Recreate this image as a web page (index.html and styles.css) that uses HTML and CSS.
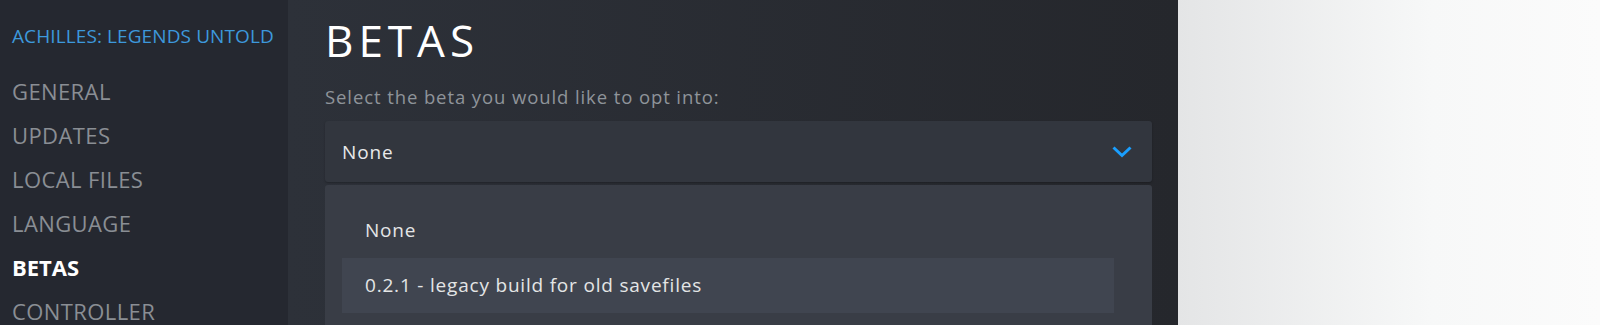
FILE: index.html
```html
<!DOCTYPE html>
<html lang="en">
<head>
    <meta charset="UTF-8">
    <meta name="viewport" content="width=device-width, initial-scale=1.0">
    <title>Properties - Betas</title>
    <link rel="stylesheet" href="styles.css">
</head>
<body>
    <div class="sidebar">
        <div class="game-title">ACHILLES: LEGENDS UNTOLD</div>
        <div class="nav-item">GENERAL</div>
        <div class="nav-item">UPDATES</div>
        <div class="nav-item">LOCAL FILES</div>
        <div class="nav-item">LANGUAGE</div>
        <div class="nav-item active">BETAS</div>
        <div class="nav-item">CONTROLLER</div>
    </div>

    <div class="main">
        <h1>BETAS</h1>
        <p class="hint">Select the beta you would like to opt into:</p>

        <div class="dropdown">
            <span>None</span>
            <svg class="chevron" width="20" height="12" viewBox="0 0 20 12">
                <path d="M1.5 1.5 L10 9.5 L18.5 1.5" fill="none" stroke="#1a9fff" stroke-width="3"/>
            </svg>
        </div>

        <div class="dropdown-list">
            <div class="option">None</div>
            <div class="option selected">0.2.1 - legacy build for old savefiles</div>
        </div>
    </div>

    <div class="outside"></div>
</body>
</html>
```

FILE: styles.css
```css
body {
    margin: 0;
    height: 325px;
    overflow: hidden;
    display: flex;
    font-family: "Open Sans", Arial, sans-serif;
    background-color: #f0f1f1;
}
.sidebar {
    width: 288px;
    flex-shrink: 0;
    box-sizing: border-box;
    padding: 24px 0 0 12px;
    background-color: #252830;
}
.game-title {
    font-size: 19px;
    line-height: 24px;
    letter-spacing: 0.1px;
    color: #3d98dc;
    margin-bottom: 21px;
    white-space: nowrap;
}
.nav-item {
    font-size: 22px;
    line-height: 44px;
    letter-spacing: 0.4px;
    color: #8a8e94;
}
.nav-item.active {
    color: #ffffff;
    font-weight: bold;
    letter-spacing: 0;
}
.main {
    width: 890px;
    flex-shrink: 0;
    box-sizing: border-box;
    padding: 18px 26px 0 37px;
    display: flex;
    flex-direction: column;
    background: linear-gradient(to right, #2d3139, #25272c);
}
h1 {
    margin: 0;
    font-size: 44px;
    line-height: 44px;
    font-weight: 400;
    letter-spacing: 5px;
    color: #ffffff;
}
.hint {
    margin: 23px 0 0;
    font-size: 18.5px;
    line-height: 24px;
    letter-spacing: 0.9px;
    color: #8f949a;
}
.dropdown {
    margin-top: 12px;
    height: 61px;
    flex-shrink: 0;
    box-sizing: border-box;
    padding: 0 20px 0 17px;
    display: flex;
    align-items: center;
    justify-content: space-between;
    background-color: #32363e;
    border-radius: 3px;
    box-shadow: 0 1px 2px rgba(0,0,0,0.25);
    font-size: 19px;
    letter-spacing: 0.9px;
    color: #e8e9ea;
}
.dropdown-list {
    flex: 1;
    margin-top: 3px;
    padding: 18px 38px 0 17px;
    background-color: #393d46;
    border-radius: 3px 3px 0 0;
}
.option {
    height: 55px;
    line-height: 55px;
    padding-left: 23px;
    font-size: 19px;
    letter-spacing: 0.8px;
    color: #e4e5e6;
}
.option.selected {
    background-color: #404550;
}
.outside {
    flex: 1;
    background: linear-gradient(to right, #e4e5e6, #f7f8f8 60%, #fbfbfb);
}
```
